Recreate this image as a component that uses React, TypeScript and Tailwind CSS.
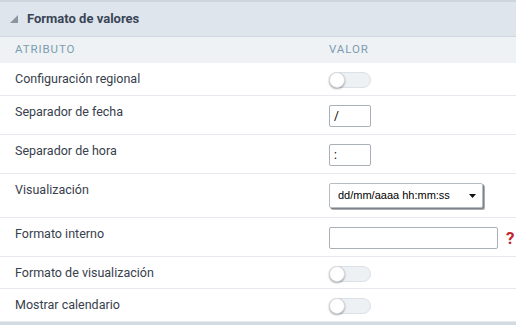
import React from 'react';

const font = { fontFamily: 'Roboto, "Liberation Sans", Arial, sans-serif' };

const Toggle: React.FC = () => (
  <div className="relative w-[42px] h-[16px] rounded-full bg-[#eef1f4] border border-[#dbe1e7]">
    <div className="absolute left-[-1px] top-[-1px] w-[16px] h-[16px] rounded-full bg-white border border-[#d6dbe0] shadow-[0_1px_2px_rgba(0,0,0,0.35)]" />
  </div>
);

const TextInput: React.FC<{ value?: string; width: string }> = ({ value, width }) => (
  <div
    className={`${width} h-[22px] border border-[#a9b0b8] rounded-[2px] bg-white flex items-center px-[4px] text-[12px] text-black`}
  >
    {value}
  </div>
);

const Select: React.FC = () => (
  <div className="relative w-[154px] h-[25px] border border-[#b5bcc3] rounded-[2px] bg-white flex items-center pl-[8px] font-['Liberation_Sans',Arial,sans-serif] text-[11px] text-black shadow-[1px_1px_0_#7d838a,2px_2px_0_#a9aeb3]">
    dd/mm/aaaa hh:mm:ss
    <svg className="absolute right-[6px] top-[10px]" width="7" height="4" viewBox="0 0 7 4">
      <polygon points="0,0 7,0 3.5,4" fill="#111" />
    </svg>
  </div>
);

interface RowProps {
  label: string;
  height: string;
  children: React.ReactNode;
}

const Row: React.FC<RowProps> = ({ label, height, children }) => (
  <div className={`flex ${height} border-b border-[#e6eaee]`}>
    <div className="w-[329px] pl-[15px] pt-[8px] text-[12.5px] leading-[16px] text-[#37404c]">{label}</div>
    <div className="pt-[8px] flex items-start gap-[6px]">{children}</div>
  </div>
);

export default function App() {
  return (
    <div className="w-[516px] h-[325px] bg-white overflow-hidden" style={font}>
      <div className="h-[37px] bg-[#dfe5ec] border-t-2 border-[#cdd6de] border-b border-b-[#cfd8e0] flex items-center pl-[10px] gap-[9px]">
        <svg width="8" height="8" viewBox="0 0 8 8">
          <polygon points="8,0 8,8 0,8" fill="#8c96a1" />
        </svg>
        <span className="text-[13px] font-bold text-[#3a4657]">Formato de valores</span>
      </div>
      <div className="h-[26px] bg-[#eef2f5] flex items-center text-[11.5px] tracking-[0.08em] text-[#7e9cb1]">
        <div className="w-[329px] pl-[15px]">ATRIBUTO</div>
        <div>VALOR</div>
      </div>
      <Row label="Configuración regional" height="h-[33px]">
        <div className="pt-[1px]">
          <Toggle />
        </div>
      </Row>
      <Row label="Separador de fecha" height="h-[39px]">
        <div className="pt-[1px]">
          <TextInput value="/" width="w-[42px]" />
        </div>
      </Row>
      <Row label="Separador de hora" height="h-[39px]">
        <div className="pt-[1px]">
          <TextInput value=":" width="w-[42px]" />
        </div>
      </Row>
      <Row label="Visualización" height="h-[44px]">
        <div className="pt-[1px]">
          <Select />
        </div>
      </Row>
      <Row label="Formato interno" height="h-[39px]">
        <div className="pt-[1px] flex items-center gap-[6px]">
          <TextInput width="w-[169px]" />
          <span className="text-[17px] font-bold text-[#c0262d] leading-[20px] pl-[2px]">?</span>
        </div>
      </Row>
      <Row label="Formato de visualización" height="h-[32px]">
        <div className="pt-[1px]">
          <Toggle />
        </div>
      </Row>
      <Row label="Mostrar calendario" height="h-[33px]">
        <div className="pt-[1px]">
          <Toggle />
        </div>
      </Row>
      <div className="h-[4px] bg-[#d3dbe2]" />
    </div>
  );
}
